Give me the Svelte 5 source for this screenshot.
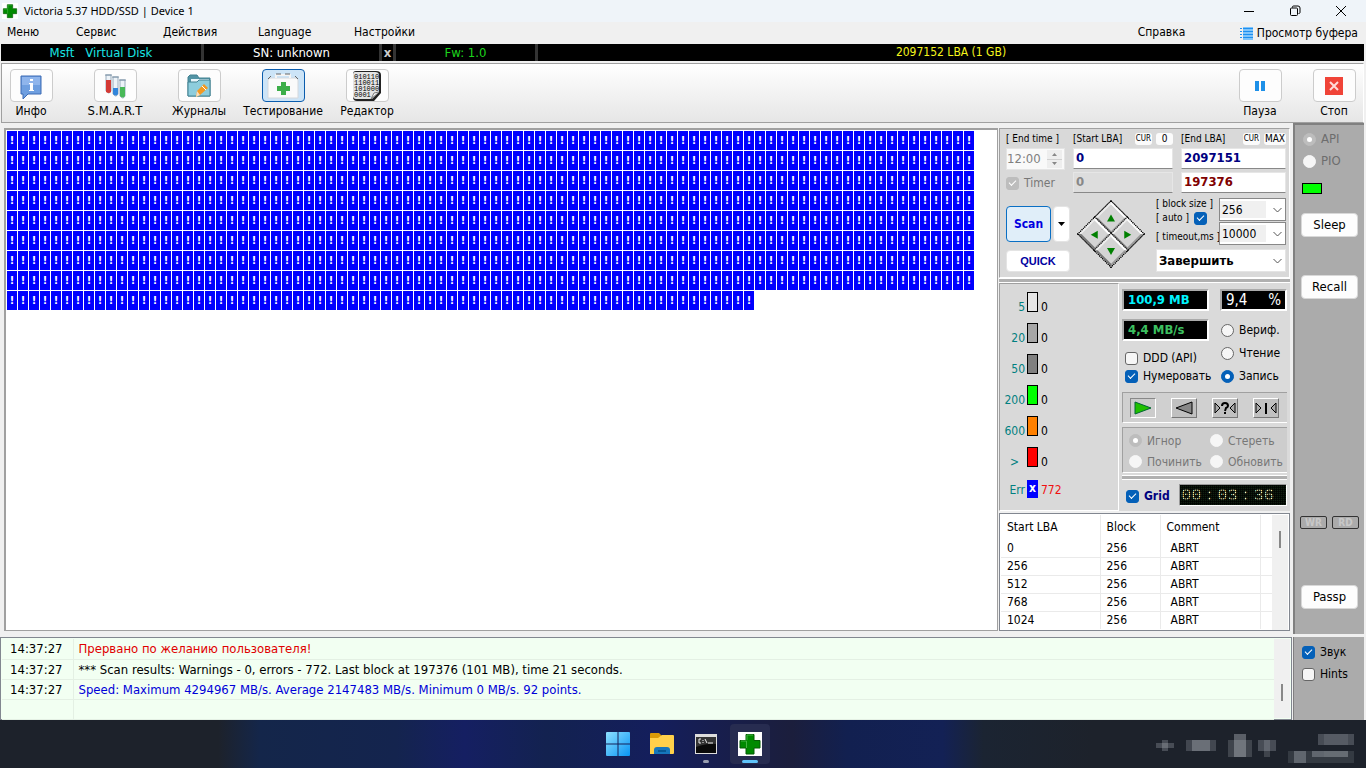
<script>
  const menu = ['Меню', 'Сервис', 'Действия', 'Language', 'Настройки'];
  const errors = 772;
  const blocks = Array.from({ length: errors });
  const speeds = [
    { label: '5', color: '#e6e6e6' },
    { label: '20', color: '#a6a6a6' },
    { label: '50', color: '#808080' },
    { label: '200', color: '#00ff00' },
    { label: '600', color: '#ff8000' },
    { label: '>', color: '#ff0000' }
  ];
  const defects = [0, 256, 512, 768, 1024];
  const log = [
    { time: '14:37:27', text: 'Прервано по желанию пользователя!', kind: 'bad' },
    { time: '14:37:27', text: '*** Scan results: Warnings - 0, errors - 772. Last block at 197376 (101 MB), time 21 seconds.', kind: '' },
    { time: '14:37:27', text: 'Speed: Maximum 4294967 MB/s. Average 2147483 MB/s. Minimum 0 MB/s. 92 points.', kind: 'note' }
  ];
  // x, y, width, height, brightness
  const tray = [
    [0, 12, 18, 5, .25], [6, 9, 6, 11, .25], [30, 9, 30, 11, .22], [36, 9, 18, 11, .3],
    [72, 9, 24, 17, .2], [78, 3, 12, 23, .36], [102, 9, 18, 11, .25], [108, 9, 6, 17, .2],
    [162, 3, 36, 11, .25], [168, 3, 24, 11, .12], [132, 20, 66, 12, .14], [138, 20, 12, 12, .3],
    [156, 20, 12, 6, .3], [168, 20, 24, 6, .34]
  ];
  let block = $state('256');
  let timeout = $state('10000');
  let finish = $state('Завершить');
  let mode = $state('write');
  let action = $state('ignore');
  let api = $state('api');
  let numbering = $state(true);
  let ddd = $state(false);
  let grid = $state(true);
  let auto = $state(true);
  let sound = $state(true);
  let hints = $state(false);
</script>

{#snippet cross(size)}
  <svg width={size} height={size} viewBox="0 0 24 24">
    <path d="M0 0h24v24H0z" fill="#fff" />
    <path d="M8 2.500h8v6h6v7.500h-6v6H8v-6H2V8.500h6z" fill="#008a00" stroke="#055c05" stroke-width="1" />
    <path d="M8.500 16V9H3M9 8V3h6" fill="none" stroke="#42b342" />
  </svg>
{/snippet}

{#snippet chevron()}
  <svg class="chevron" width="9" height="6" viewBox="0 0 9 6"><path d="M.5 1l4 4 4-4" fill="none" stroke="#555" /></svg>
{/snippet}

<div class="desktop">
  <header class="title">
    {@render cross(16)}
    <h1>Victoria 5.37 HDD/SSD | Device 1</h1>
    <div class="window-buttons">
      <button aria-label="Minimize"><svg width="12" height="12"><path d="M1 6.500h10" stroke="#000" /></svg></button>
      <button aria-label="Restore"><svg width="12" height="12"><path d="M3.500 2.500v-.5q0-1 1-1H9q2 0 2 2v4.500q0 1-1.500 1M2.500 3h5q1 0 1 1v5.500q0 1-1 1h-5q-1 0-1-1V4q0-1 1-1z" fill="none" stroke="#000" /></svg></button>
      <button aria-label="Close"><svg width="12" height="12"><path d="M1 1l10 10M11 1L1 11" stroke="#000" /></svg></button>
    </div>
  </header>

  <nav class="menu">
    {#each menu as item}
      <a href="#{item}">{item}</a>
    {/each}
    <a class="help" href="#help">Справка</a>
    <a class="buffer" href="#buffer">
      <svg width="13" height="13" viewBox="0 0 13 13">
        <path d="M3 0h10v13H3z" fill="#7fc4fa" />
        <path d="M3 1.500h10M3 4.500h10M3 7.500h10M3 10.500h10" stroke="#1e90f0" />
        <path d="M1 1v12" stroke="#1e90f0" stroke-width="2" stroke-dasharray="1 2" />
      </svg>
      Просмотр буфера
    </a>
  </nav>

  <div class="drive">
    <span class="model">Msft &nbsp; Virtual Disk</span>
    <span class="serial">SN: unknown</span>
    <button>x</button>
    <span class="firmware">Fw: 1.0</span>
    <span class="size">2097152 LBA (1 GB)</span>
  </div>

  <div class="toolbar">
    <button class="tool">
      <span class="face">
        <svg width="24" height="26" viewBox="0 0 24 26">
          <path d="M2 3h20v18H9l-5 5v-5H2z" fill="#6f9fe0" stroke="#3c6bb4" />
          <path d="M3 4h18v8H3z" fill="#8fb5ec" />
          <path d="M11 6h3v2h-3zM10 10h4v7h1v1h-5v-1h1v-6h-1z" fill="#fff" />
        </svg>
      </span>
      Инфо
    </button>
    <button class="tool smart">
      <span class="face">
        <svg width="24" height="26" viewBox="0 0 24 26">
          <path d="M3 2h5v16q-2 4-5 0zM10 4h5v17q-2 4-5 0zM17 7h5v16q-2 4-5 0z" fill="#edf3f8" stroke="#9aacbc" />
          <path d="M3 7h5v12q-2 2-5 0z" fill="#d43a35" />
          <path d="M10 15h5v6q-2 3-5 0z" fill="#3286db" />
          <path d="M17 14h5v9q-2 3-5 0z" fill="#48b858" />
          <path d="M2 2h7M9 4h7M16 7h7" stroke="#7a91a5" />
        </svg>
      </span>
      S.M.A.R.T
    </button>
    <button class="tool">
      <span class="face">
        <svg width="26" height="26" viewBox="0 0 26 26">
          <path d="M2 23V4l2-2h7l2 3h11v18z" fill="#5294a5" stroke="#438292" />
          <path d="M5 6h18v12H5z" fill="#e9f6fb" />
          <path d="M2 9h9l2-2h11v16H2z" fill="#8dcddd" stroke="#438292" />
          <path d="M10 24l1-6 7-7 4 4-8 7z" fill="#f49a22" />
          <path d="M10 24l1-6 3 4z" fill="#f4dfc1" /><path d="M16 13l4 4" stroke="#fff" />
        </svg>
      </span>
      Журналы
    </button>
    <button class="tool active">
      <span class="face">
        <svg width="32" height="26" viewBox="0 0 32 26">
          <path d="M1 7q0-2 3-2h24q3 0 3 2v18H1z" fill="#fafafa" stroke="#d5d8dc" />
          <path d="M9 5V2h14v3" fill="none" stroke="#f4f4f4" stroke-width="2" />
          <path d="M9 1h5M18 1h5M1 6l3-3M31 6l-3-3" fill="none" stroke="#666" />
          <path d="M14 9h5v4h4v5h-4v4h-5v-4h-4v-5h4z" fill="#3cae49" />
        </svg>
      </span>
      Тестирование
    </button>
    <button class="tool">
      <span class="face">
        <svg width="30" height="30" viewBox="0 0 30 30">
          <path d="M4 0h20q5 0 5 4v18l-7 8H5q-4 0-4-4V3q0-3 3-3z" fill="#222" />
          <path d="M3 1h20q4 0 4 3v17l-7 7H4q-3 0-3-3V3q0-2 2-2z" fill="#e4e4e4" />
          <g class="bits"><text x="2" y="8">010110</text><text x="2" y="14">110011</text><text x="2" y="20">101000</text><text x="2" y="26">0001</text></g>
          <path d="M19 28l3-6 5-1z" fill="#fff" stroke="#777" />
        </svg>
      </span>
      Редактор
    </button>
    <button class="tool pause">
      <span class="face"><svg width="10" height="10"><path d="M0 0h4v10H0zM6 0h4v10H6z" fill="#1e90e8" /></svg></span>
      Пауза
    </button>
    <button class="tool">
      <span class="face"><svg width="18" height="18"><path d="M0 0h18v18H0z" fill="#f04438" /><path d="M5 5l8 8M13 5l-8 8" stroke="#ffdcd8" stroke-width="2" /></svg></span>
      Стоп
    </button>
  </div>

  <main>
    <div class="map">
      {#each blocks as _}
        <span>!</span>
      {/each}
    </div>

    <div class="side">
      <section class="panel range">
        <div class="limits">
          <div class="caption"><label for="end-time">[ End time ]</label></div>
          <div class="caption"><label for="start">[Start LBA]</label><button class="push">CUR</button><button>0</button></div>
          <div class="caption"><label for="end">[End LBA]</label><button class="push">CUR</button><button>MAX</button></div>
          <div class="spin">
            <input id="end-time" value="12:00" disabled />
            <svg width="15" height="18" viewBox="0 0 15 18"><path d="M0 0h15v18H0z" fill="#eee" /><path d="M0 9.500h15" stroke="#d0d0d0" /><path d="M5 6h5L7.500 3zM5 12h5l-2.500 3z" fill="#888" /></svg>
          </div>
          <input id="start" class="lba" value="0" />
          <input id="end" class="lba" value="2097151" />
          <label class="tick off"><input type="checkbox" checked disabled /> Timer</label>
          <input class="lba gray" value="0" disabled aria-label="Current start" />
          <input class="lba maroon" value="197376" aria-label="Current LBA" />
        </div>
        <div class="run">
          <div class="start">
            <button class="scan">Scan</button>
            <button class="more" aria-label="Scan options"><svg width="7" height="4"><path d="M0 0h7L3.500 4z" /></svg></button>
            <button class="quick">QUICK</button>
          </div>
          <div class="pad">
            <div class="keys">
              <button aria-label="Up"><svg width="10" height="10"><path d="M5 1l4 7H1z" /></svg></button>
              <button aria-label="Right"><svg width="10" height="10"><path d="M9 5L2 9V1z" /></svg></button>
              <button aria-label="Left"><svg width="10" height="10"><path d="M1 5l7 4V1z" /></svg></button>
              <button aria-label="Down"><svg width="10" height="10"><path d="M5 9l4-7H1z" /></svg></button>
            </div>
          </div>
          <div class="options">
            <div class="option-labels">
              <label for="block">[ block size ]</label>
              <label class="auto">[ auto ] <input type="checkbox" bind:checked={auto} /></label>
              <label for="timeout">[ timeout,ms ]</label>
            </div>
            <div class="option-values">
              <div class="combo"><select id="block" bind:value={block}><option>256</option></select>{@render chevron()}</div>
              <div class="combo"><select id="timeout" bind:value={timeout}><option>10000</option></select>{@render chevron()}</div>
            </div>
            <div class="combo finish"><select bind:value={finish} aria-label="On finish"><option>Завершить</option></select>{@render chevron()}</div>
          </div>
        </div>
      </section>
      <div class="bar"></div>

      <div class="middle">
        <section class="panel speeds">
          {#each speeds as speed}
            <div class="speed"><span class="ms">{speed.label}</span><i style="background: {speed.color}"></i><span>0</span></div>
          {/each}
          <div class="speed err"><span class="ms">Err</span><b>x</b><span>{errors}</span></div>
        </section>
        <section class="status">
          <div class="readings">
            <div class="column">
              <output class="cyan">100,9 MB</output>
              <output class="green">4,4 MB/s</output>
              <div class="ticks">
                <label class="tick"><input type="checkbox" bind:checked={ddd} /> DDD (API)</label>
                <label class="tick"><input type="checkbox" bind:checked={numbering} /> Нумеровать</label>
              </div>
            </div>
            <div class="column narrow">
              <output class="percent"><span>9,4</span><span>%</span></output>
              <div class="modes">
                <label class="tick"><input type="radio" value="verify" bind:group={mode} /> Вериф.</label>
                <label class="tick"><input type="radio" value="read" bind:group={mode} /> Чтение</label>
                <label class="tick"><input type="radio" value="write" bind:group={mode} /> Запись</label>
              </div>
            </div>
          </div>
          <div class="transport">
            <button class="down" aria-label="Forward"><svg width="18" height="14"><path d="M1 1l16 6-16 6z" fill="#20c000" stroke="#063" /></svg></button>
            <button aria-label="Backward"><svg width="18" height="14"><path d="M17 1L1 7l16 6z" fill="#888" stroke="#000" /></svg></button>
            <button aria-label="Random"><svg width="22" height="14"><path d="M1 2l5 5-5 5zM21 2l-5 5 5 5z" fill="#aaa" stroke="#000" /><path d="M8 5q0-3 3-3t3 3q0 1-2 2l-1 3M11 11v2" fill="none" stroke="#000" stroke-width="2" /></svg></button>
            <button aria-label="Butterfly"><svg width="22" height="14"><path d="M1 2l5 5-5 5zM21 2l-5 5 5 5z" fill="#aaa" stroke="#000" /><path d="M11 2v11" stroke="#000" stroke-width="2" /></svg></button>
          </div>
          <div class="actions">
            <label class="tick off"><input type="radio" value="ignore" bind:group={action} disabled /> Игнор</label>
            <label class="tick off"><input type="radio" value="erase" bind:group={action} disabled /> Стереть</label>
            <label class="tick off"><input type="radio" value="remap" bind:group={action} disabled /> Починить</label>
            <label class="tick off"><input type="radio" value="refresh" bind:group={action} disabled /> Обновить</label>
          </div>
          <div class="bar"></div>
          <div class="clock-row">
            <label class="tick grid"><input type="checkbox" bind:checked={grid} /> Grid</label>
            <time class="clock"><span>00</span><span>:</span><span>03</span><span>:</span><span>36</span></time>
          </div>
        </section>
      </div>

      <div class="defects">
        <table>
          <thead><tr><th>Start LBA</th><th>Block</th><th>Comment</th><th></th></tr></thead>
          <tbody>
            {#each defects as lba}
              <tr><td>{lba}</td><td>256</td><td class="comment">ABRT</td><td></td></tr>
            {/each}
          </tbody>
        </table>
        <div class="scroll"><i></i></div>
      </div>
    </div>

    <aside class="rail">
      <label class="tick off"><input type="radio" value="api" bind:group={api} disabled /> API</label>
      <label class="tick off"><input type="radio" value="pio" bind:group={api} disabled /> PIO</label>
      <div class="led"></div>
      <button class="sleep">Sleep</button>
      <button class="recall">Recall</button>
      <div class="lamps"><span>WR</span><span>RD</span></div>
      <button class="passp">Passp</button>
    </aside>
  </main>

  <footer>
    <div class="log">
      <table>
        <tbody>
          {#each log as line}
            <tr><td>{line.time}</td><td class={line.kind}>{line.text}</td></tr>
          {/each}
          <tr><td></td><td></td></tr>
        </tbody>
      </table>
      <div class="scroll low"><i></i></div>
    </div>
    <div class="rail prefs">
      <label class="tick"><input type="checkbox" bind:checked={sound} /> Звук</label>
      <label class="tick"><input type="checkbox" bind:checked={hints} /> Hints</label>
    </div>
  </footer>

  <div class="taskbar">
    <div></div>
    <div class="apps">
      <button aria-label="Start">
        <svg width="24" height="24" viewBox="0 0 24 24">
          <defs><linearGradient id="win" x2="1" y2="1"><stop stop-color="#8ee0ff" /><stop offset="1" stop-color="#0894f4" /></linearGradient></defs>
          <path d="M1 0h10.500v11.500H0V1q0-1 1-1zM12.500 0H23q1 0 1 1v10.500H12.500zM0 12.500h11.500V24H1q-1 0-1-1zM12.500 12.500H24V23q0 1-1 1H12.500z" fill="url(#win)" />
        </svg>
      </button>
      <button aria-label="Explorer">
        <svg width="26" height="24" viewBox="0 0 26 24">
          <path d="M1 7V2q0-1 1-1h8l3 3v4z" fill="#d99a08" />
          <path d="M1 6h8l4-3h11q1 0 1 1v17q0 1-1 1H1z" fill="#ffd04a" />
          <path d="M5 22v-4q0-3 3-3h10q3 0 3 3v4z" fill="#1676bb" /><path d="M9 19h8" stroke="#075893" stroke-width="2" />
        </svg>
      </button>
      <button class="console" aria-label="Console">
        <svg width="22" height="20" viewBox="0 0 22 20">
          <path d="M0 0h22v20H0z" fill="#ddd" /><path d="M1 3h20v16H1z" fill="#0a0a0a" /><path d="M1 3h20v7q-8-1-20 3z" fill="#333" />
          <path d="M6 5H4v4h2M8 6v1M8 8v1M10 5l2 4M13 9h5" fill="none" stroke="#eee" />
        </svg>
      </button>
      <button class="current" aria-label="Victoria">{@render cross(24)}</button>
    </div>
    <svg class="tray" width="200" height="36">
      {#each tray as [x, y, width, height, light]}
        <rect {x} {y} {width} {height} fill="#c8ccd4" fill-opacity={light} />
      {/each}
    </svg>
  </div>
</div>

<style>
  :global(body) {
    margin: 0;
  }
  .desktop {
    display: flex;
    flex-direction: column;
    min-height: 100vh;
    background: #f0f0f0;
    color: #000;
    font-family: "DejaVu Sans Condensed", "DejaVu Sans", sans-serif;
    font-size: 12px;
    line-height: 16px;
  }
  .desktop *, .desktop *::before {
    box-sizing: border-box;
  }
  button, input, select {
    margin: 0;
    padding: 0;
    border: 0;
    font: inherit;
    color: inherit;
  }
  svg {
    display: block;
    flex: none;
  }
  a {
    color: inherit;
    text-decoration: none;
  }
  .title {
    display: flex;
    align-items: center;
    height: 22px;
    padding-left: 2px;
    background: #eff4f9;
  }
  h1 {
    margin: 0 0 0 6px;
    font: 11px/16px "Noto Sans", sans-serif;
  }
  .window-buttons {
    display: flex;
    margin-left: auto;
    padding-right: 2px;
  }
  .window-buttons button {
    width: 46px;
    height: 20px;
    display: flex;
    align-items: center;
    justify-content: center;
    background: none;
  }
  .menu {
    display: grid;
    grid-template-columns: 69px 87px 95px 96px 1fr 102px auto;
    align-items: center;
    height: 22px;
    padding: 0 8px 2px 7px;
  }
  .buffer {
    display: flex;
    align-items: center;
    gap: 4px;
    padding-top: 2px;
  }
  .drive {
    display: flex;
    height: 17px;
    margin: 0 2px 0 1px;
    background: #000;
    font-size: 13px;
    text-align: center;
  }
  .drive > * {
    border-right: 3px solid #333;
    line-height: 17px;
  }
  .model { width: 203px; color: #19e5e5; }
  .serial { width: 178px; color: #fff; }
  .drive button { width: 14px; background: #000; color: #ccc; font-weight: bold; }
  .firmware { width: 142px; color: #1cd41c; }
  .drive .size { flex: 1; border: 0; color: #f4f41c; font-size: 12px; }
  .toolbar {
    display: flex;
    gap: 42px;
    height: 60px;
    margin: 2px 2px 0 1px;
    padding: 5px 8px 0 8px;
    border: 1px solid #a0a0a0;
    border-right-color: #fff;
    background: linear-gradient(#fff, #e6e6e6);
  }
  .tool {
    display: flex;
    flex-direction: column;
    align-items: center;
    gap: 1px;
    width: 42px;
    background: none;
    white-space: nowrap;
  }
  .smart { font-size: 13px; }
  .pause {
    margin-left: auto;
    margin-right: -10px;
  }
  .face {
    display: flex;
    align-items: center;
    justify-content: center;
    flex: none;
    width: 43px;
    height: 33px;
    border: 1px solid #ccc;
    border-radius: 4px;
    background: #fdfdfd;
  }
  .active .face {
    border-color: #0a5cad;
    background: #cce4f7;
  }
  .bits {
    font: 7px "Liberation Mono", monospace;
  }
  main {
    display: flex;
    flex: 1;
    padding: 0 2px 0 4px;
  }
  .map {
    flex: 1;
    display: grid;
    grid-template-columns: repeat(auto-fill, 10px);
    grid-auto-rows: 19px;
    gap: 1px;
    align-content: start;
    margin: 5px 1px 3px 0;
    padding: 1px 21px 1px 1px;
    border: 1px solid #a0a0a0;
    border-width: 2px 1px 1px 2px;
    background: #fff;
  }
  .map span {
    background: #00f;
    color: #fff;
    font: bold 11px/20px "DejaVu Sans Condensed", sans-serif;
    text-align: center;
    overflow: hidden;
  }
  .side {
    display: flex;
    flex-direction: column;
    width: 291px;
    padding: 5px 0 3px;
  }
  .panel {
    border: 1px solid #a0a0a0;
    border-right-color: #fff;
    border-bottom-color: #fff;
    background: #d9d9d9;
  }
  .bar {
    flex: none;
    height: 5px;
    border: 1px solid #fff;
    border-width: 1px 0;
    background: #b0b0b0;
  }
  .range {
    height: 150px;
    padding: 3px 3px 0 6px;
  }
  .limits {
    display: grid;
    grid-template-columns: 59px 100px 105px;
    grid-template-rows: 14px 22px 22px;
    gap: 2px 8px;
  }
  .caption {
    display: flex;
    align-items: center;
    gap: 4px;
    font-size: 10px;
    line-height: 14px;
    white-space: nowrap;
  }
  .caption label { flex: 1; }
  .caption button {
    min-width: 17px;
    height: 12px;
    padding: 0 1px;
    border-radius: 3px;
    background: #fbfbfb;
    line-height: 12px;
  }
  .caption .push { font-size: 8px; }
  .spin {
    display: flex;
    align-items: center;
    padding-right: 2px;
    background: #f9f9f9;
    color: #808080;
    border: 1px solid #e4e4e4;
    font-size: 13px;
  }
  .spin input {
    flex: 1;
    width: 20px;
    background: none;
  }
  .lba {
    width: 100%;
    height: 21px;
    padding: 0 2px 2px;
    border: 1px solid #e6e6e6;
    border-bottom-color: #888;
    background: #fff;
    color: #000080;
    font-size: 13px;
    font-weight: bold;
  }
  .gray { background: #ddd; color: #888; }
  .maroon { color: #800000; }
  .tick {
    display: flex;
    align-items: center;
    gap: 5px;
    white-space: nowrap;
  }
  .off { color: #777; }
  input[type="checkbox"], input[type="radio"] {
    appearance: none;
    display: flex;
    align-items: center;
    justify-content: center;
    flex: none;
    width: 13px;
    height: 13px;
    border: 1px solid #666;
    border-radius: 3px;
    background: #f6f6f6;
  }
  input[type="radio"] { border-radius: 50%; }
  input:checked {
    border-color: #0460b8;
    background: #0460b8;
  }
  input[type="checkbox"]:checked::before {
    content: "";
    width: 7px;
    height: 4px;
    border: solid #fff;
    border-width: 0 0 1px 1px;
    transform: rotate(-45deg);
    margin-bottom: 2px;
  }
  input[type="radio"]:checked::before {
    content: "";
    width: 5px;
    height: 5px;
    border-radius: 50%;
    background: #fff;
  }
  input[type="radio"]:disabled { border-color: #f6f6f6; }
  input:checked:disabled {
    border-color: #bdbdbd;
    background: #bdbdbd;
  }
  .run {
    display: flex;
    margin-top: 4px;
  }
  .start {
    display: grid;
    grid-template-columns: 45px 17px;
    grid-template-rows: 36px 22px;
    gap: 8px 2px;
    width: 70px;
    padding-top: 8px;
    color: #0000e0;
    font-weight: bold;
  }
  .start button {
    border: 1px solid #e4e4e4;
    border-radius: 4px;
    background: #fff;
  }
  .start .scan {
    border-color: #0a6fc4;
    background: #e0eef9;
  }
  .more {
    display: flex;
    align-items: center;
    justify-content: center;
  }
  .quick {
    grid-column: span 2;
    font: bold 11px "Liberation Sans", sans-serif;
    color: #0000a0;
  }
  .pad {
    display: flex;
    align-items: center;
    justify-content: center;
    width: 70px;
    height: 72px;
  }
  .keys {
    display: grid;
    grid-template-columns: 23px 23px;
    transform: rotate(45deg);
    outline: 1px dotted #000;
  }
  .keys button {
    display: flex;
    align-items: center;
    justify-content: center;
    height: 23px;
    border: 2px solid;
    border-color: #fff #999 #777 #eee;
    outline: 1px dotted #000;
    background: #d4d4d4;
  }
  .keys svg {
    transform: rotate(-45deg);
    fill: #008000;
  }
  .options {
    flex: 1;
    display: grid;
    grid-template-columns: 63px 67px;
    gap: 4px 0;
    padding-left: 10px;
  }
  .option-labels {
    display: flex;
    flex-direction: column;
    font-size: 10px;
    line-height: 12px;
    white-space: nowrap;
  }
  .option-labels label:last-child { padding-top: 5px; }
  .auto {
    display: flex;
    align-items: center;
    gap: 5px;
    height: 16px;
  }
  .option-values {
    display: grid;
    gap: 1px;
  }
  .combo {
    position: relative;
    height: 23px;
    border: 1px solid #888;
    background: #fff;
  }
  .combo select {
    appearance: none;
    width: 100%;
    height: 100%;
    padding: 0 18px 0 2px;
    border: 2px solid #fff;
    border-width: 2px 0;
    background: linear-gradient(90deg, #f0f0f0 46px, #fff 46px);
    line-height: 16px;
  }
  .chevron {
    position: absolute;
    right: 3px;
    top: 8px;
    pointer-events: none;
  }
  .finish {
    grid-column: span 2;
    border-color: #e4e4e4;
    font-weight: bold;
  }
  .finish select { background: #fff; font-size: 13px; }
  .middle {
    display: flex;
    height: 228px;
    background: #dadada;
  }
  .speeds {
    width: 120px;
    padding-left: 4px;
    border-right-color: #fff;
  }
  .speed {
    display: grid;
    grid-template-columns: 21px 11px 1fr;
    align-items: end;
    gap: 0 2px;
    height: 31px;
  }
  .speed .ms {
    color: #008080;
    text-align: right;
  }
  .speed:nth-child(6) .ms { text-align: center; }
  .speed i {
    height: 20px;
    margin-bottom: 3px;
    border: 1px solid #000;
  }
  .speed span:last-child { padding-left: 1px; }
  .speed b {
    height: 18px;
    background: #00f;
    color: #fff;
    text-align: center;
  }
  .speed.err { height: 28px; }
  .speed.err span:last-child { color: #f01010; }
  .status {
    flex: 1;
    display: flex;
    flex-direction: column;
    gap: 4px;
    padding: 6px 3px 0 3px;
  }
  .readings {
    display: flex;
    justify-content: space-between;
    height: 99px;
  }
  .column {
    display: flex;
    flex-direction: column;
    gap: 8px;
    width: 87px;
  }
  .narrow { width: 67px; }
  output {
    display: flex;
    justify-content: space-between;
    flex: none;
    height: 22px;
    padding: 0 4px;
    border: 2px solid #aaa;
    border-right-color: #fff;
    border-bottom-color: #fff;
    background: #000;
    font-size: 13px;
    font-weight: bold;
    line-height: 18px;
  }
  .cyan { color: #00f4ff; }
  .green { color: #3cc060; }
  .percent { color: #fff; font-size: 15px; font-weight: normal; }
  .ticks {
    display: grid;
    gap: 2px;
    padding: 1px 0 0 3px;
  }
  .modes {
    display: grid;
    gap: 7px;
    padding: 3px 0 0 1px;
  }
  .transport {
    display: flex;
    justify-content: space-between;
    flex: none;
    height: 31px;
    padding: 5px 8px 4px 7px;
    border: 1px solid #a0a0a0;
    border-right: 0;
    border-bottom-color: #fff;
    background: #d0d0d0;
  }
  .transport button {
    display: flex;
    align-items: center;
    justify-content: center;
    width: 26px;
    border: 1px solid #fff;
    border-right-color: #777;
    border-bottom-color: #777;
    background: #c0c0c0;
  }
  .transport .down { border-color: #888 #fff #fff #888; background: #ccc; }
  .actions {
    display: grid;
    grid-template-columns: 81px auto;
    align-items: center;
    flex: none;
    height: 46px;
    border: 1px solid #a0a0a0;
    border-right: 0;
    border-bottom-color: #fff;
    padding: 2px 0 0 6px;
    background: #cdcdcd;
  }
  .status .bar { margin-top: -2px; }
  .clock-row {
    display: flex;
    align-items: center;
    justify-content: space-between;
    padding-left: 4px;
  }
  .grid {
    padding-top: 2px;
    color: #000080;
    font-weight: bold;
  }
  .clock {
    position: relative;
    display: flex;
    justify-content: space-between;
    width: 108px;
    height: 22px;
    padding: 0 12px 0 1px;
    border: 1px solid #999;
    border-right-color: #fff;
    border-bottom-color: #fff;
    background: #102010;
    color: #ffffc0;
    font: 17px/21px "Liberation Mono", monospace;
  }
  .clock::after {
    content: "";
    position: absolute;
    inset: 0;
    background:
      repeating-linear-gradient(90deg, #000a 0 1px, transparent 1px 2px),
      repeating-linear-gradient(#000a 0 1px, transparent 1px 2px);
  }
  .defects {
    display: flex;
    flex: 1;
    margin-top: 2px;
    padding: 1px 1px 0;
    border: 1px solid #828790;
    background: #fff;
  }
  table {
    flex: 1;
    border-collapse: collapse;
    table-layout: fixed;
    align-self: flex-start;
  }
  th, td {
    height: 18px;
    padding: 0 6px;
    border-right: 1px solid #eaeaea;
    border-bottom: 1px solid #eaeaea;
    font-weight: normal;
    text-align: left;
    line-height: 16px;
    white-space: nowrap;
  }
  .defects th { height: 24px; border-bottom: 0; }
  .defects th:nth-child(1) { width: 99px; }
  .defects th:nth-child(2) { width: 60px; }
  .defects th:nth-child(3) { width: 100px; }
  .defects td:last-child, .defects th:last-child { padding: 0; border-right: 0; }
  .defects .comment { padding-left: 10px; }
  .defects tbody tr:last-child td { border-bottom: 0; }
  .scroll {
    display: flex;
    justify-content: center;
    width: 16px;
    padding-top: 16px;
    background: #f0f0f0;
  }
  .scroll i {
    width: 2px;
    height: 17px;
    background: #888;
  }
  .low { padding-top: 45px; }
  .rail {
    display: flex;
    flex-direction: column;
    width: 71px;
    margin-left: 3px;
    padding: 3px 6px 0;
    border-left: 2px solid #808080;
    border-top: 2px solid #808080;
    background: #ababab;
    font-size: 13px;
  }
  .rail .tick { height: 22px; padding-left: 2px; }
  .rail .off { color: #6d6d6d; }
  .rail button {
    height: 24px;
    border: 1px solid #d8d8d8;
    border-radius: 4px;
    background: #fdfdfd;
  }
  .led {
    width: 20px;
    height: 11px;
    margin: 11px 0 19px 1px;
    border: 1px solid #000;
    background: #0f0;
  }
  .recall { margin-top: 38px; }
  .lamps {
    display: flex;
    gap: 5px;
    margin: 217px -1px 56px;
  }
  .lamps span {
    flex: 1;
    height: 13px;
    border: 1px solid #333;
    border-radius: 2px;
    color: #c8c8c8;
    font: bold 10px/11px "DejaVu Sans Condensed", sans-serif;
    text-align: center;
  }
  footer {
    display: flex;
    margin: 3px 2px 0 0;
  }
  .log {
    flex: 1;
    display: flex;
    height: 83px;
    padding: 1px;
    border: 1px solid #828790;
    background: #f2fff2;
    font-size: 13px;
  }
  .log table { table-layout: auto; }
  .log td {
    height: 20px;
    padding: 1px 5px 0;
    border-color: #e4f0e4;
  }
  .log td:first-child { width: 71px; padding-left: 8px; }
  .log td:last-child { border-right: 0; }
  .bad { color: #e00000; }
  .note { color: #0000d8; }
  .prefs {
    margin-left: 1px;
    padding-top: 4px;
    border-top: 0;
    border-left: 1px solid #808080;
    font-size: 12px;
  }
  .taskbar {
    display: grid;
    grid-template-columns: 1fr auto 1fr;
    align-items: center;
    height: 48px;
    background: linear-gradient(90deg, #1d222b 0 16%, #14264a 19%, #14244e 29%, #151f62 34%, #132250 40%, #141e5c 48%, #1b1e3c 58%, #122050 62%, #132155 69%, #1b2432 72%, #1d222b 80%);
  }
  .apps {
    display: flex;
    gap: 4px;
    padding-left: 2px;
  }
  .apps button {
    display: flex;
    position: relative;
    align-items: center;
    justify-content: center;
    width: 40px;
    height: 40px;
    border-radius: 4px;
    background: none;
  }
  .apps .current { background: #272c50; }
  .console::after, .current::after {
    content: "";
    position: absolute;
    bottom: 1px;
    width: 6px;
    height: 3px;
    border-radius: 2px;
    background: #999fb0;
  }
  .current::after { width: 16px; background: #60c4fa; }
  .tray {
    justify-self: end;
    margin: 10px 10px 0 0;
  }
</style>
